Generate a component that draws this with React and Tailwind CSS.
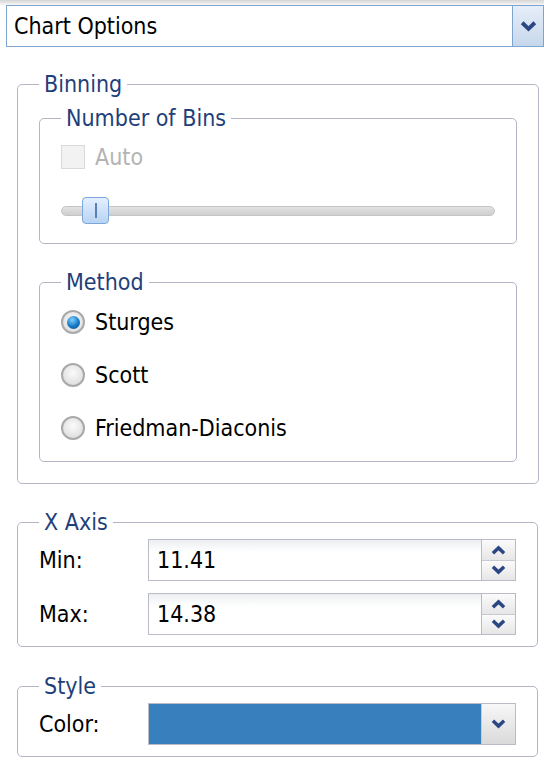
import React, { useState } from 'react';

const font = "font-['DejaVu_Sans_Condensed','DejaVu_Sans',sans-serif]";

const Chevron = ({ up = false, className = '' }) => (
  <svg viewBox="0 0 14 9" className={className}>
    <polyline
      points={up ? '1.8,7.6 7,2.6 12.2,7.6' : '1.8,1.4 7,6.4 12.2,1.4'}
      fill="none"
      stroke="#2a4683"
      strokeWidth="3.2"
      strokeLinejoin="miter"
    />
  </svg>
);

const Group = ({ title, className = '', children }) => (
  <fieldset className={`border border-[#b4b6c6] rounded-[5px] px-[21px] ${className}`}>
    <legend className="px-[5px] text-[23px] leading-[26px] text-[#1f3f7a]">{title}</legend>
    {children}
  </fieldset>
);

const Radio = ({ checked, label, onClick }) => (
  <div className="flex items-center h-[26px] cursor-pointer" onClick={onClick}>
    <div className="w-[24px] h-[24px] rounded-full border-2 border-[#a9a9a9] bg-[radial-gradient(circle_at_50%_40%,#fbfbfb,#d6d6d6)] flex items-center justify-center">
      {checked && (
        <div className="w-[13px] h-[13px] rounded-full bg-[radial-gradient(circle_at_40%_30%,#7fd0ff,#1476c4_55%,#0a4f8c)]" />
      )}
    </div>
    <span className="ml-[10px] text-[23px] text-black">{label}</span>
  </div>
);

const Spin = ({ value }) => (
  <div className="flex h-[42px]">
    <div className="flex-1 flex items-center border border-[#b9bcc6] bg-[linear-gradient(#eceef1,#ffffff_30%)] pl-[8px] text-[23px] text-black">
      {value}
    </div>
    <div className="w-[34px] flex flex-col border border-l-0 border-[#b9bcc6]">
      <div className="flex-1 flex items-center justify-center bg-[linear-gradient(#fbfbfb,#e6e6e6)] border-b border-[#c8cad2]">
        <Chevron up className="w-[15px] h-[10px]" />
      </div>
      <div className="flex-1 flex items-center justify-center bg-[linear-gradient(#fbfbfb,#e6e6e6)]">
        <Chevron className="w-[15px] h-[10px]" />
      </div>
    </div>
  </div>
);

export default function App() {
  const [method, setMethod] = useState('Sturges');

  return (
    <div className={`w-[544px] h-[767px] bg-white overflow-hidden ${font}`}>
      <div className="h-[5px] bg-[linear-gradient(#d4d4d4,#f6f6f6)]" />
      {/* Top dropdown */}
      <div className="ml-[6px] flex h-[42px] border border-[#7da5d0] bg-white">
        <div className="flex-1 flex items-center pl-[7px] text-[23px] text-black">Chart Options</div>
        <div className="w-[31px] flex items-center justify-center border-l border-[#7da5d0] bg-[linear-gradient(#e6eef8,#c6d7ec)]">
          <Chevron className="w-[17px] h-[11px]" />
        </div>
      </div>

      <div className="pl-[17px] pr-[6px] pt-[24px]">
        <Group title="Binning" className="pt-[8px] pb-[21px]">
          <Group title="Number of Bins" className="pt-[13px] pb-[19px]">
            <div className="flex items-center h-[26px]">
              <div className="w-[24px] h-[24px] border border-[#dadada] bg-[#f2f2f2]" />
              <span className="ml-[10px] text-[23px] text-[#b3b3b3]">Auto</span>
            </div>
            <div className="relative mt-[27px] h-[27px] flex items-center">
              <div className="w-[434px] h-[10px] rounded-full border border-[#c4c4c4] bg-[linear-gradient(#e2e2e2,#cfcfcf)]" />
              <div className="absolute left-[21px] top-0 w-[27px] h-[27px] rounded-[4px] border border-[#7aa7dc] bg-[linear-gradient(#e3efff,#b9d3f3)] flex items-center justify-center">
                <div className="w-[2px] h-[15px] bg-[#5b7fae]" />
              </div>
            </div>
          </Group>

          <Group title="Method" className="mt-[25px] pt-[14px] pb-[20px]">
            <div className="flex flex-col gap-[27px]">
              {['Sturges', 'Scott', 'Friedman-Diaconis'].map((m) => (
                <Radio key={m} label={m} checked={method === m} onClick={() => setMethod(m)} />
              ))}
            </div>
          </Group>
        </Group>

        <Group title="X Axis" className="mt-[25px] pt-[4px] pb-[11px]">
          <div className="flex items-center">
            <span className="w-[109px] text-[23px] text-black">Min:</span>
            <div className="flex-1"><Spin value="11.41" /></div>
          </div>
          <div className="flex items-center mt-[12px]">
            <span className="w-[109px] text-[23px] text-black">Max:</span>
            <div className="flex-1"><Spin value="14.38" /></div>
          </div>
        </Group>

        <Group title="Style" className="mt-[26px] pt-[4px] pb-[11px]">
          <div className="flex items-center">
            <span className="w-[109px] text-[23px] text-black">Color:</span>
            <div className="flex-1 flex h-[42px] border border-[#b9bcc6]">
              <div className="flex-1 bg-[#3780bd]" />
              <div className="w-[34px] flex items-center justify-center border-l border-[#c8cad2] bg-[linear-gradient(#f7f7f7,#dadada)]">
                <Chevron className="w-[15px] h-[10px]" />
              </div>
            </div>
          </div>
        </Group>
      </div>
    </div>
  );
}
